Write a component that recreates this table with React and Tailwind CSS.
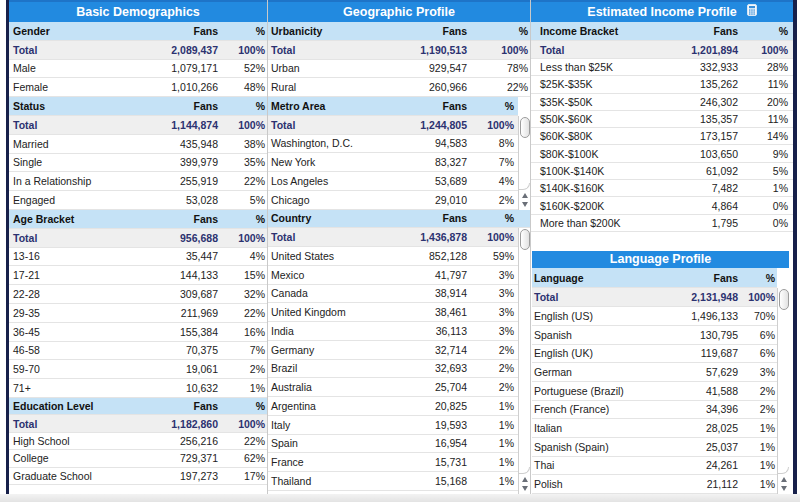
import React from 'react';

const BASIC = [
  { name: 'Gender', total: '2,089,437', rows: [['Male', '1,079,171', '52%'], ['Female', '1,010,266', '48%']] },
  { name: 'Status', total: '1,144,874', rows: [['Married', '435,948', '38%'], ['Single', '399,979', '35%'], ['In a Relationship', '255,919', '22%'], ['Engaged', '53,028', '5%']] },
  {
    name: 'Age Bracket', total: '956,688', rows: [
      ['13-16', '35,447', '4%'], ['17-21', '144,133', '15%'], ['22-28', '309,687', '32%'], ['29-35', '211,969', '22%'],
      ['36-45', '155,384', '16%'], ['46-58', '70,375', '7%'], ['59-70', '19,061', '2%'], ['71+', '10,632', '1%'],
    ],
  },
];

const EDUCATION = { name: 'Education Level', total: '1,182,860', rows: [['High School', '256,216', '22%'], ['College', '729,371', '62%'], ['Graduate School', '197,273', '17%']] };

const URBAN = { name: 'Urbanicity', total: '1,190,513', rows: [['Urban', '929,547', '78%'], ['Rural', '260,966', '22%']] };
const METRO = { name: 'Metro Area', total: '1,244,805', rows: [['Washington, D.C.', '94,583', '8%'], ['New York', '83,327', '7%'], ['Los Angeles', '53,689', '4%'], ['Chicago', '29,010', '2%']] };
const COUNTRY = {
  name: 'Country', total: '1,436,878', rows: [
    ['United States', '852,128', '59%'], ['Mexico', '41,797', '3%'], ['Canada', '38,914', '3%'], ['United Kingdom', '38,461', '3%'],
    ['India', '36,113', '3%'], ['Germany', '32,714', '2%'], ['Brazil', '32,693', '2%'], ['Australia', '25,704', '2%'],
    ['Argentina', '20,825', '1%'], ['Italy', '19,593', '1%'], ['Spain', '16,954', '1%'], ['France', '15,731', '1%'], ['Thailand', '15,168', '1%'],
  ],
};

const INCOME = {
  name: 'Income Bracket', total: '1,201,894', rows: [
    ['Less than $25K', '332,933', '28%'], ['$25K-$35K', '135,262', '11%'], ['$35K-$50K', '246,302', '20%'], ['$50K-$60K', '135,357', '11%'],
    ['$60K-$80K', '173,157', '14%'], ['$80K-$100K', '103,650', '9%'], ['$100K-$140K', '61,092', '5%'], ['$140K-$160K', '7,482', '1%'],
    ['$160K-$200K', '4,864', '0%'], ['More than $200K', '1,795', '0%'],
  ],
};

const LANGUAGE = {
  name: 'Language', total: '2,131,948', rows: [
    ['English (US)', '1,496,133', '70%'], ['Spanish', '130,795', '6%'], ['English (UK)', '119,687', '6%'], ['German', '57,629', '3%'],
    ['Portuguese (Brazil)', '41,588', '2%'], ['French (France)', '34,396', '2%'], ['Italian', '28,025', '1%'], ['Spanish (Spain)', '25,037', '1%'],
    ['Thai', '24,261', '1%'], ['Polish', '21,112', '1%'],
  ],
};

function Row({ cells, kind, h, pl, pw }) {
  const look =
    kind === 'head'
      ? 'bg-[#c5e2f6] font-bold text-[#111]'
      : kind === 'total'
      ? 'bg-[#efefef] font-bold text-[#2c3270]'
      : 'bg-white text-[#222]';
  return (
    <div className={`flex shrink-0 items-center whitespace-nowrap leading-[12px] border-b border-[#e4e4e4] ${h} ${pl} ${look}`}>
      <span className="flex-1">{cells[0]}</span>
      <span className="text-right">{cells[1]}</span>
      <span className={`text-right ${pw}`}>{cells[2]}</span>
    </div>
  );
}

// header row + total row + data rows
function Group({ g, h, pl, pw, noHead }) {
  return (
    <>
      {!noHead && <Row cells={[g.name, 'Fans', '%']} kind="head" h={h} pl={pl} pw={pw} />}
      <Row cells={['Total', g.total, '100%']} kind="total" h={h} pl={pl} pw={pw} />
      {g.rows.map((r) => (
        <Row key={r[0]} cells={r} h={h} pl={pl} pw={pw} />
      ))}
    </>
  );
}

function Arrows() {
  return (
    <div className="flex flex-col items-center gap-[4px] py-[3px]">
      <svg width="6" height="5" viewBox="0 0 6 5">
        <path d="M3 0 L6 5 L0 5 Z" fill="#6a6f78" />
      </svg>
      <svg width="6" height="5" viewBox="0 0 6 5">
        <path d="M0 0 L6 0 L3 5 Z" fill="#6a6f78" />
      </svg>
    </div>
  );
}

function Scroll({ top }) {
  return (
    <div className="w-[12px] shrink-0 flex flex-col bg-white">
      <div className={top} />
      <div className="flex-1 flex flex-col border-l border-[#cfcfcf]">
        <div className="h-[21px] w-[10px] ml-[1px] mt-[1px] rounded-full border border-[#9c9c9c] bg-gradient-to-r from-white to-[#e2e2e2]" />
        <div className="flex-1" />
        <div className="h-[7px] rounded-br-full border-b border-r border-[#cfcfcf]" />
        <Arrows />
      </div>
    </div>
  );
}

function Band({ children }) {
  return (
    <div className="h-[22px] shrink-0 bg-[#228ae0] border-t-2 border-[#1e74c8] flex items-center justify-center text-white font-bold text-[12.5px]">
      {children}
    </div>
  );
}

function Calculator() {
  return (
    <svg className="absolute left-full top-[1px] ml-[10px]" width="10" height="12" viewBox="0 0 10 12">
      <rect x="0.5" y="0.5" width="9" height="11" rx="1.5" fill="#f4f8fc" stroke="#d8e6f4" />
      <rect x="2" y="2" width="6" height="2.2" fill="#3a8fd8" />
      {[0, 1, 2].map((r) =>
        [0, 1, 2].map((c) => (
          <rect key={`${r}${c}`} x={2 + c * 2.2} y={5.4 + r * 2} width="1.5" height="1.3" fill="#3a8fd8" />
        ))
      )}
    </svg>
  );
}

export default function App() {
  const h = 'h-[18.8px]';
  return (
    <div className="w-[800px] h-[502px] bg-white flex flex-col font-['Liberation_Sans',Arial,sans-serif] text-[10.5px]">
      <div className="h-[494px] ml-[6px] mr-[3px] border-l-[3px] border-r-[4px] border-[#17204a] flex">
        {/* Basic Demographics */}
        <div className="w-[258px] flex flex-col">
          <Band>Basic Demographics</Band>
          {BASIC.map((g) => (
            <Group key={g.name} g={g} h={h} pl="pl-[4px]" pw="w-[49px] pr-[2px]" />
          ))}
          <Group g={EDUCATION} h="h-[17.4px]" pl="pl-[4px]" pw="w-[49px] pr-[2px]" />
        </div>

        {/* Geographic Profile */}
        <div className="w-[263px] flex flex-col border-l border-[#c9c9c9]">
          <Band>Geographic Profile</Band>
          <Group g={URBAN} h="h-[18.75px]" pl="pl-[3px]" pw="w-[63px] pr-[2px]" />
          <div className="flex shrink-0">
            <div className="flex-1 flex flex-col">
              <Group g={METRO} h="h-[18.75px]" pl="pl-[3px]" pw="w-[51px] pr-[4px]" />
            </div>
            <Scroll top="h-[18.75px]" />
          </div>
          <Row cells={[COUNTRY.name, 'Fans', '%']} kind="head" h="h-[18.75px]" pl="pl-[3px]" pw="w-[63px] pr-[16px]" />
          <div className="flex flex-1">
            <div className="flex-1 flex flex-col">
              <Group g={COUNTRY} h="h-[18.75px]" pl="pl-[3px]" pw="w-[51px] pr-[4px]" noHead />
            </div>
            <Scroll top="h-0" />
          </div>
        </div>

        {/* Estimated Income Profile */}
        <div className="w-[263px] flex flex-col border-l border-[#c9c9c9]">
          <Band>
            <span className="relative">
              Estimated Income Profile
              <Calculator />
            </span>
          </Band>
          <Row cells={[INCOME.name, 'Fans', '%']} kind="head" h="h-[19px]" pl="pl-[9px]" pw="w-[55px] pr-[5px]" />
          <Row cells={['Total', INCOME.total, '100%']} kind="total" h="h-[18px]" pl="pl-[9px]" pw="w-[55px] pr-[5px]" />
          {INCOME.rows.map((r) => (
            <Row key={r[0]} cells={r} h="h-[17.3px]" pl="pl-[9px]" pw="w-[55px] pr-[5px]" />
          ))}
          <div className="flex-1" />
          <div className="ml-[1px] mr-[4px] flex flex-col">
            <div className="h-[17px] bg-[#228ae0] flex items-center justify-center text-white font-bold text-[12.5px]">Language Profile</div>
            <div className="flex">
              <div className="flex-1 flex flex-col">
                <Row cells={[LANGUAGE.name, 'Fans', '%']} kind="head" h="h-[20px]" pl="pl-[2px]" pw="w-[39px] pr-[2px]" />
                <Row cells={['Total', LANGUAGE.total, '100%']} kind="total" h="h-[19px]" pl="pl-[2px]" pw="w-[39px] pr-[2px]" />
                {LANGUAGE.rows.map((r) => (
                  <Row key={r[0]} cells={r} h="h-[18.7px]" pl="pl-[2px]" pw="w-[39px] pr-[2px]" />
                ))}
              </div>
              <Scroll top="h-[20px]" />
            </div>
          </div>
        </div>
      </div>
      <div className="flex-1 bg-gradient-to-b from-[#f3f3f3] to-[#e3e3e3]" />
    </div>
  );
}
